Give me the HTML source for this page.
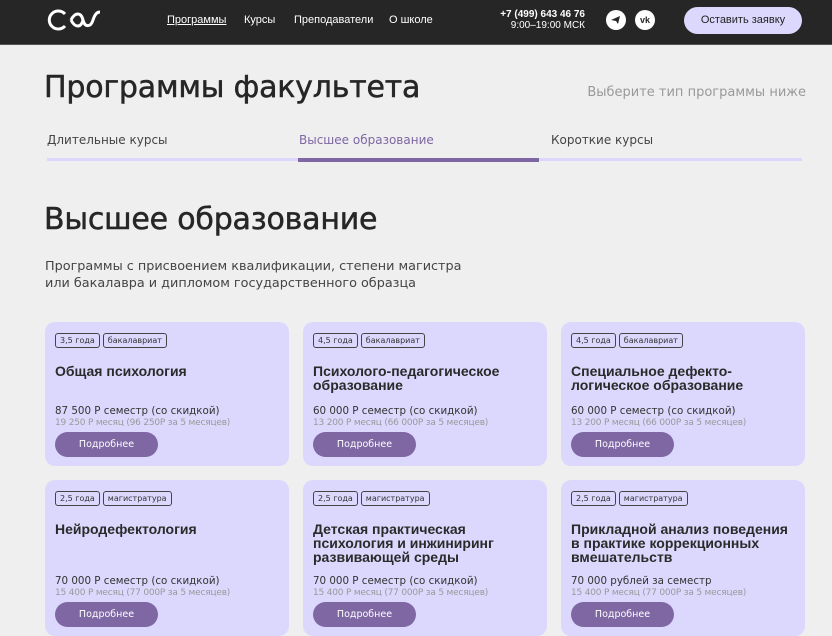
<!DOCTYPE html>
<html><head><meta charset="utf-8"><style>
*{margin:0;padding:0;box-sizing:border-box}
body{width:832px;height:632px;overflow:hidden;background:#efefef;font-family:"DejaVu Sans","Liberation Sans",sans-serif;color:#262626;position:relative}
.hdr{position:absolute;left:0;top:0;width:832px;height:45px;background:#262626;border-bottom:1px solid #555}
.hdr .nav{position:absolute;top:14px;font:11px "Liberation Sans",sans-serif;color:#fff}
.a{position:absolute;white-space:nowrap}
.card{position:absolute;width:244px;background:#dcd8fd;border-radius:10px}
.tags{position:absolute;left:10px;top:11px;display:flex;gap:3px}
.tag{border:1px solid #444;border-radius:3px;font-size:8px;padding:2px 4px;line-height:9px;color:#333}
.ttl{position:absolute;left:10px;top:42px;font:bold 14px/14px "Liberation Sans",sans-serif;color:#2a2a2a;width:232px}
.bot{position:absolute;left:10px;bottom:9px}
.pr{font-size:10.3px;color:#333;line-height:13px;white-space:nowrap}
.sub{font-size:9px;color:#999;line-height:11px;white-space:nowrap;letter-spacing:-0.2px}
.btn{margin-top:3px;width:103px;height:25px;border-radius:13px;background:#7e67a3;color:#fff;font-size:9.5px;text-align:center;line-height:25px}
</style></head><body>
<div class="hdr">
<svg class="a" style="left:47px;top:9px" width="54" height="22" viewBox="0 0 54 22"><path d="M18 5 A9 9 0 1 0 18 17" fill="none" stroke="#fff" stroke-width="3"/><path d="M24 11 C28 3 34 3 36 11 C38 19 44 18 46 11 C48 5 50 3 53 3" fill="none" stroke="#fff" stroke-width="3"/><path d="M24 11 C28 19 34 19 36 11" fill="none" stroke="#fff" stroke-width="3"/></svg>
<div class="nav" style="left:167px;text-decoration:underline">Программы</div>
<div class="nav" style="left:244px">Курсы</div>
<div class="nav" style="left:294px">Преподаватели</div>
<div class="nav" style="left:389px">О школе</div>
<div class="a" style="right:247px;top:9px;font:bold 10px/11px 'Liberation Sans',sans-serif;color:#fff;text-align:right">+7 (499) 643 46 76<br><span style="font-weight:normal">9:00–19:00 МСК</span></div>
<div class="a" style="left:606px;top:10px;width:20px;height:20px;border-radius:50%;background:#fff"><svg width="20" height="20" viewBox="0 0 20 20"><path d="M5 10 L14 6 L12 14 L10 11 Z" fill="#262626"/></svg></div>
<div class="a" style="left:635px;top:10px;width:20px;height:20px;border-radius:50%;background:#fff;font:bold 9px/20px 'Liberation Sans';color:#262626;text-align:center">vk</div>
<div class="a" style="left:684px;top:7px;width:118px;height:27px;border-radius:14px;background:#dcd8fd;font:11px/27px 'Liberation Sans',sans-serif;text-align:center;color:#222">Оставить заявку</div>
</div>
<div class="a" style="left:44px;top:70px;font-size:30px;color:#262626;letter-spacing:-0.2px;-webkit-text-stroke:0.5px #262626">Программы факультета</div>
<div class="a" style="right:26px;top:85px;font-size:13px;color:#999">Выберите тип программы ниже</div>
<div class="a" style="left:47px;top:133px;font-size:12px;color:#444">Длительные курсы</div>
<div class="a" style="left:299px;top:133px;font-size:12px;color:#7e67a3">Высшее образование</div>
<div class="a" style="left:551px;top:133px;font-size:12px;color:#444">Короткие курсы</div>
<div class="a" style="left:47px;top:158px;width:755px;height:3px;background:#dcd8fd"></div>
<div class="a" style="left:298px;top:158px;width:241px;height:4px;background:#7e67a3"></div>
<div class="a" style="left:44px;top:202px;font-size:30px;color:#262626;letter-spacing:-0.2px;-webkit-text-stroke:0.5px #262626">Высшее образование</div>
<div class="a" style="left:45px;top:258px;font-size:12.8px;line-height:17px;color:#444">Программы с присвоением квалификации, степени магистра<br>или бакалавра и дипломом государственного образца</div>

<div class="card" style="left:45px;top:322px;height:144px"><div class="tags"><span class="tag">3,5 года</span><span class="tag">бакалавриат</span></div><div class="ttl">Общая психология</div><div class="bot"><div class="pr">87 500 Р семестр (со скидкой)</div><div class="sub">19 250 Р месяц (96 250Р за 5 месяцев)</div><div class="btn">Подробнее</div></div></div>
<div class="card" style="left:303px;top:322px;height:144px"><div class="tags"><span class="tag">4,5 года</span><span class="tag">бакалавриат</span></div><div class="ttl">Психолого-педагогическое<br>образование</div><div class="bot"><div class="pr">60 000 Р семестр (со скидкой)</div><div class="sub">13 200 Р месяц (66 000Р за 5 месяцев)</div><div class="btn">Подробнее</div></div></div>
<div class="card" style="left:561px;top:322px;height:144px"><div class="tags"><span class="tag">4,5 года</span><span class="tag">бакалавриат</span></div><div class="ttl">Специальное дефекто-<br>логическое образование</div><div class="bot"><div class="pr">60 000 Р семестр (со скидкой)</div><div class="sub">13 200 Р месяц (66 000Р за 5 месяцев)</div><div class="btn">Подробнее</div></div></div>

<div class="card" style="left:45px;top:480px;height:156px"><div class="tags"><span class="tag">2,5 года</span><span class="tag">магистратура</span></div><div class="ttl">Нейродефектология</div><div class="bot"><div class="pr">70 000 Р семестр (со скидкой)</div><div class="sub">15 400 Р месяц (77 000Р за 5 месяцев)</div><div class="btn">Подробнее</div></div></div>
<div class="card" style="left:303px;top:480px;height:156px"><div class="tags"><span class="tag">2,5 года</span><span class="tag">магистратура</span></div><div class="ttl">Детская практическая<br>психология и инжиниринг<br>развивающей среды</div><div class="bot"><div class="pr">70 000 Р семестр (со скидкой)</div><div class="sub">15 400 Р месяц (77 000Р за 5 месяцев)</div><div class="btn">Подробнее</div></div></div>
<div class="card" style="left:561px;top:480px;height:156px"><div class="tags"><span class="tag">2,5 года</span><span class="tag">магистратура</span></div><div class="ttl">Прикладной анализ поведения<br>в практике коррекционных<br>вмешательств</div><div class="bot"><div class="pr">70 000 рублей за семестр</div><div class="sub">15 400 Р месяц (77 000Р за 5 месяцев)</div><div class="btn">Подробнее</div></div></div>
</body></html>
